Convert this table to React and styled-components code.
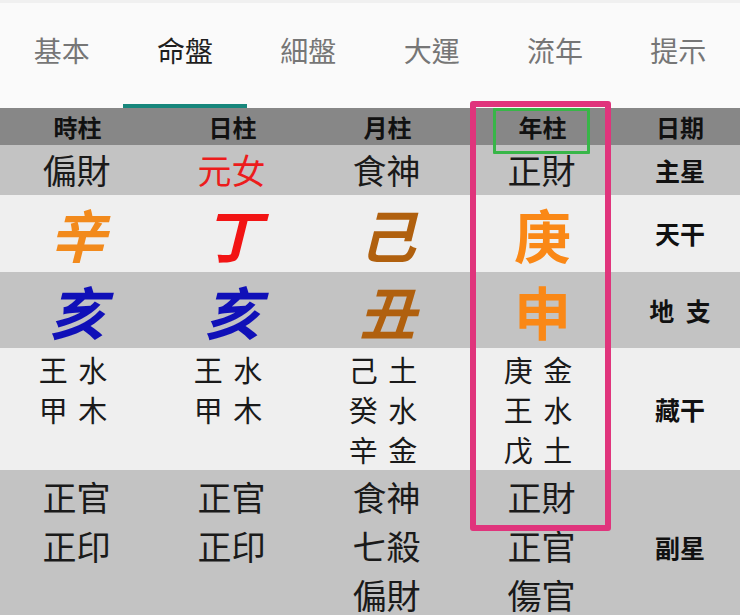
import React from "react";
import styled, { createGlobalStyle } from "styled-components";

const GlobalStyle = createGlobalStyle`
  html, body {
    margin: 0;
    padding: 0;
    background: #fafafa;
    font-family: "Noto Sans CJK TC", "Noto Sans CJK SC", "Noto Sans", sans-serif;
  }
`;

const Page = styled.div`
  position: relative;
  width: 740px;
  height: 615px;
  overflow: hidden;
  background: #fafafa;
  border-top: 3px solid #f0f0f0;
  box-sizing: border-box;
`;

const TabBar = styled.div`
  display: grid;
  grid-template-columns: repeat(6, 1fr);
  height: 105px;
`;

const Tab = styled.div`
  display: flex;
  align-items: center;
  justify-content: center;
  font-size: 28px;
  color: ${(p) => (p.$active ? "#1e1e1e" : "#767676")};
  border-bottom: 4px solid ${(p) => (p.$active ? "#17877c" : "transparent")};
  padding-bottom: 7px;
  box-sizing: border-box;
`;

const Table = styled.div`
  display: grid;
  grid-template-columns: 155px 155px 155px 155px 120px;
`;

const Row = styled.div`
  display: contents;
`;

const Cell = styled.div`
  display: flex;
  flex-direction: column;
  align-items: center;
  justify-content: ${(p) => (p.$top ? "flex-start" : "center")};
  height: ${(p) => p.$h}px;
  box-sizing: border-box;
  padding-top: ${(p) => p.$pt || 0}px;
  background: ${(p) => p.$bg};
`;

const HeadText = styled.span`
  font-size: 24px;
  font-weight: 700;
  color: #111;
  line-height: 1;
`;

const StarText = styled.span`
  font-size: 34px;
  color: ${(p) => p.$color || "#1a1a1a"};
  line-height: ${(p) => p.$lh || 50}px;
  margin-right: 2px;
`;

const BigChar = styled.span`
  font-size: 57px;
  font-weight: 700;
  font-style: ${(p) => (p.$italic ? "italic" : "normal")};
  color: ${(p) => p.$color};
  line-height: 1;
`;

const HiddenText = styled.span`
  font-size: 29px;
  color: #1a1a1a;
  line-height: 40px;
  word-spacing: 4px;
  margin-right: 9px;
`;

const Label = styled.span`
  font-size: 25px;
  font-weight: 700;
  color: #111;
  line-height: 1;
  word-spacing: ${(p) => (p.$spaced ? "6px" : "0")};
`;

const Frame = styled.div`
  position: absolute;
  left: ${(p) => p.$x}px;
  top: ${(p) => p.$y}px;
  width: ${(p) => p.$w}px;
  height: ${(p) => p.$hh}px;
  box-sizing: border-box;
  border: ${(p) => p.$b}px solid ${(p) => p.$color};
  border-radius: ${(p) => p.$r}px;
  pointer-events: none;
`;

const tabs = ["基本", "命盤", "細盤", "大運", "流年", "提示"];

const DARK = "#878787";
const MID = "#c3c3c3";
const LIGHT = "#efefef";

const pillars = [
  { head: "時柱", star: "偏財", stem: "辛", stemColor: "#f28a1c", branch: "亥", branchColor: "#1010b8", hidden: ["王 水", "甲 木"], sub: ["正官", "正印"], italic: true },
  { head: "日柱", star: "元女", starColor: "#ec1c1c", stem: "丁", stemColor: "#f21414", branch: "亥", branchColor: "#1010b8", hidden: ["王 水", "甲 木"], sub: ["正官", "正印"], italic: true },
  { head: "月柱", star: "食神", stem: "己", stemColor: "#b0600e", branch: "丑", branchColor: "#b0600e", hidden: ["己 土", "癸 水", "辛 金"], sub: ["食神", "七殺", "偏財"], italic: true },
  { head: "年柱", star: "正財", stem: "庚", stemColor: "#fa8816", branch: "申", branchColor: "#fa8816", hidden: ["庚 金", "王 水", "戊 土"], sub: ["正財", "正官", "傷官"], italic: false },
];

export default function App() {
  return (
    <>
      <GlobalStyle />
      <Page>
        <TabBar>
          {tabs.map((t, i) => (
            <Tab key={t} $active={i === 1}>{t}</Tab>
          ))}
        </TabBar>
        <Table>
          <Row>
            {pillars.map((p) => (
              <Cell key={p.head} $h={37} $bg={DARK}><HeadText>{p.head}</HeadText></Cell>
            ))}
            <Cell $h={37} $bg={DARK}><HeadText>日期</HeadText></Cell>
          </Row>
          <Row>
            {pillars.map((p) => (
              <Cell key={p.head} $h={50} $bg={MID}><StarText $color={p.starColor}>{p.star}</StarText></Cell>
            ))}
            <Cell $h={50} $bg={MID}><Label>主星</Label></Cell>
          </Row>
          <Row>
            {pillars.map((p) => (
              <Cell key={p.head} $h={77} $bg={LIGHT}><BigChar $italic={p.italic} $color={p.stemColor}>{p.stem}</BigChar></Cell>
            ))}
            <Cell $h={77} $bg={LIGHT}><Label>天干</Label></Cell>
          </Row>
          <Row>
            {pillars.map((p) => (
              <Cell key={p.head} $h={76} $bg={MID}><BigChar $italic={p.italic} $color={p.branchColor}>{p.branch}</BigChar></Cell>
            ))}
            <Cell $h={76} $bg={MID}><Label $spaced>地 支</Label></Cell>
          </Row>
          <Row>
            {pillars.map((p) => (
              <Cell key={p.head} $h={122} $bg={LIGHT} $top $pt={1}>
                {p.hidden.map((h) => <HiddenText key={h}>{h}</HiddenText>)}
              </Cell>
            ))}
            <Cell $h={122} $bg={LIGHT}><Label>藏干</Label></Cell>
          </Row>
          <Row>
            {pillars.map((p) => (
              <Cell key={p.head} $h={154} $bg={MID} $top $pt={2}>
                {p.sub.map((s) => <StarText key={s} $lh={49}>{s}</StarText>)}
              </Cell>
            ))}
            <Cell $h={154} $bg={MID}><Label>副星</Label></Cell>
          </Row>
        </Table>
        <Frame $x={470} $y={98} $w={141} $hh={430} $b={6} $r={3} $color="#e0347c" />
        <Frame $x={493} $y={105} $w={97} $hh={46} $b={3} $r={1} $color="#38b648" />
      </Page>
    </>
  );
}
